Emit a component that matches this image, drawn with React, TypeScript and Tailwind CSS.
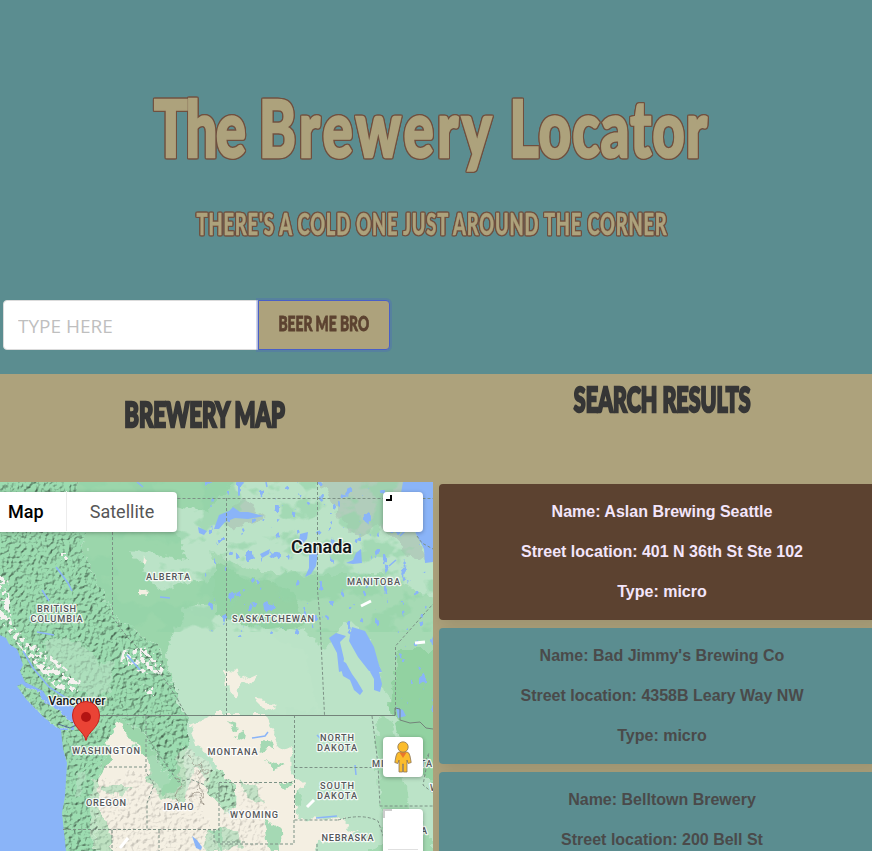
import React from "react";

const display = "font-['Lato'] font-black [stroke-linejoin:round] [paint-order:stroke_fill]";
const outline = "[filter:drop-shadow(1px_0_0_#70503f)_drop-shadow(-1px_0_0_#70503f)_drop-shadow(0_1px_0_#70503f)_drop-shadow(0_-1px_0_#70503f)]";

const results = [
  { name: "Aslan Brewing Seattle", street: "401 N 36th St Ste 102", type: "micro" },
  { name: "Bad Jimmy's Brewing Co", street: "4358B Leary Way NW", type: "micro" },
  { name: "Belltown Brewery", street: "200 Bell St", type: "micro" },
];

const labels: [string, number, number, number][] = [
  ["ALBERTA", 168, 579.5, 44],
  ["MANITOBA", 373.5, 584.5, 53],
  ["BRITISH", 56.5, 612, 39],
  ["COLUMBIA", 56.5, 621.5, 52],
  ["SASKATCHEWAN", 273, 621.5, 82],
  ["WASHINGTON", 106, 753.5, 68],
  ["MONTANA", 232.5, 754.5, 50],
  ["NORTH", 337, 741, 34],
  ["DAKOTA", 337, 750.5, 40],
  ["SOUTH", 337, 789, 34],
  ["DAKOTA", 337, 798.5, 40],
  ["OREGON", 106, 805.5, 40],
  ["IDAHO", 178.5, 809.5, 30],
  ["WYOMING", 254, 817.5, 48],
  ["NEBRASKA", 347.5, 840.5, 52],
  ["MINNESOTA", 402, 766.5, 60],
  ["IOWA", 414, 833.5, 26],
  ["W", 434, 790.5, 9],
];

function Terrain() {
  return (
    <svg className="block h-full w-full" viewBox="0 482 433 369" fontFamily="Roboto, sans-serif">
      <defs>
        <filter id="relief" x="0" y="0" width="100%" height="100%" colorInterpolationFilters="sRGB">
          <feTurbulence type="fractalNoise" baseFrequency="0.24" numOctaves="3" seed="8" result="n" />
          <feDiffuseLighting in="n" surfaceScale="1.8" diffuseConstant="1.2" lightingColor="#fff" result="l">
            <feDistantLight azimuth="225" elevation="58" />
          </feDiffuseLighting>
          <feTurbulence type="fractalNoise" baseFrequency="0.08" numOctaves="3" seed="2" result="edge" />
          <feDisplacementMap in="SourceGraphic" in2="edge" scale="16" xChannelSelector="R" yChannelSelector="G" result="s" />
          <feBlend in="s" in2="l" mode="multiply" result="b" />
          <feComposite in="b" in2="s" operator="in" />
        </filter>
        <filter id="soft" x="0" y="0" width="100%" height="100%" colorInterpolationFilters="sRGB">
          <feTurbulence type="fractalNoise" baseFrequency="0.025 0.035" numOctaves="4" seed="14" />
          <feColorMatrix values="0 0 0 0 0.58  0 0 0 0 0.83  0 0 0 0 0.66  14 0 0 0 -7.1" result="p" />
          <feComposite in="p" in2="SourceGraphic" operator="in" />
        </filter>
        <filter id="lakes" x="0" y="0" width="100%" height="100%" colorInterpolationFilters="sRGB">
          <feTurbulence type="fractalNoise" baseFrequency="0.11 0.08" numOctaves="3" seed="5" />
          <feColorMatrix values="0 0 0 0 0.54  0 0 0 0 0.71  0 0 0 0 0.97  0 30 0 0 -20.8" result="p" />
          <feComposite in="p" in2="SourceGraphic" operator="in" />
        </filter>
        <filter id="snow" x="0" y="0" width="100%" height="100%" colorInterpolationFilters="sRGB">
          <feTurbulence type="fractalNoise" baseFrequency="0.2" numOctaves="2" seed="3" />
          <feColorMatrix values="0 0 0 0 0.96  0 0 0 0 0.95  0 0 0 0 0.94  0 20 0 0 -10" result="p" />
          <feComposite in="p" in2="SourceGraphic" operator="in" />
        </filter>
        <filter id="ragged" x="-5%" y="-5%" width="110%" height="110%">
          <feTurbulence type="fractalNoise" baseFrequency="0.08" numOctaves="3" seed="2" />
          <feDisplacementMap in="SourceGraphic" scale="14" xChannelSelector="R" yChannelSelector="G" />
        </filter>
      </defs>

      <rect y="482" width="433" height="369" fill="#bbe3c7" />
      <path d="M0 482H90V700L70 851H50V700L0 640Z" fill="#91d1a4" />
      <g filter="url(#ragged)">
        <path d="M60 470H240L210 510L160 500L190 560L130 550L160 590L235 570L240 600L185 608L165 650L180 715L190 851H60Z" fill="#9bd6ab" />
        <path d="M210 550L250 570L310 575L380 575L440 600V735L400 720L385 690L370 640L350 620L325 650L305 630L240 618Z" fill="#a6dab4" />
        <path d="M216 565L240 575L290 590L305 625L265 630L216 615Z" fill="#96d2a5" />
        <path d="M397 650H440V790L405 760L390 705Z" fill="#92d2a1" />
        <path d="M315 470H410L405 495L425 560L410 556L380 525L358 538L340 518ZM240 500L265 515L235 528L220 520Z" fill="#b1cdbb" />
        <path d="M165 650L185 612L245 625L300 648L320 710L180 715Z" fill="#bde4c8" />
        <path d="M375 715L390 720L400 750L410 806L433 840V860H360L385 840L378 790Z" fill="#a3d9b1" />
      </g>
      <rect y="482" width="433" height="150" filter="url(#soft)" opacity=".6" />

      <g filter="url(#ragged)" fill="#f4efe2">
        <path d="M105 742L118 720L126 735L140 742L150 765L149 779L162 800L185 799L197 765L208 779L218 766L198 745L190 724L215 714L263 714L279 743L293 752L294 782L307 780L294 798L298 816L334 817L357 831L343 839L319 841L318 860H112V837L101 812L97 781L112 758Z" />
        <path d="M225 668L237 670L242 680L260 672L250 684L238 688L237 697L227 690ZM252 699L270 700L278 707L263 710Z" />
        <path d="M138 590L148 593L145 597L138 595ZM141 555L145 561L140 564ZM95 685L112 682L110 698L101 694Z" />
      </g>
      <g filter="url(#ragged)" fill="#a5d9b4">
        <path d="M206 770L232 778L235 793L228 800L234 816L222 809L218 792L206 787ZM238 780L258 786L263 804L251 800ZM147 758L162 750L174 767L168 780L159 793L151 780ZM102 785L121 784L131 790L110 798ZM134 740L141 748L130 750ZM239 732L247 730L245 740L235 744ZM260 744L272 742L275 749L261 752ZM295 790L304 798L300 807L294 804ZM264 815L279 830L280 851L270 851Z" />
        <path d="M210 830L238 828L241 845L220 851H205ZM228 722L240 726L234 731ZM265 760L285 766L272 770ZM282 780L294 783L285 790Z" />
      </g>

      <g filter="url(#relief)">
        <path d="M-20 470H76L82 525L90 568L112 612L138 632L159 649L171 679L184 710L191 740L184 759L168 778L157 759L146 739L132 724L119 717L109 736L101 764L96 793L98 814L91 870H40L50 785L40 728L10 686L-20 630Z" fill="#9cdcb0" />
        <path d="M206 768L228 775L237 790L236 810L224 813L207 786Z" fill="#b5e4c0" />
      </g>
      <g filter="url(#relief)" opacity=".38">
        <path d="M90 780L149 772L164 796L192 785L205 815L218 851H93ZM178 742L207 761L212 783L190 803L179 783ZM238 780L263 786L267 851H220L222 810L243 804Z" fill="#f8f3e7" />
      </g>
      <path d="M43 640L78 639L100 665L115 661L108 690L92 704L75 684L62 667L51 674ZM78 775L85 768L84 800L76 798Z" fill="#bbe3c7" opacity=".55" filter="url(#ragged)" />
      <g filter="url(#snow)">
        <path d="M0 575L8 578L12 625L30 642L43 649L81 681L77 694L56 688L36 666L19 646L0 620ZM123 650L150 647L164 669L161 675L141 673L120 662ZM61 553L68 553L68 560L61 560ZM143 684L153 686L154 696L147 697Z" />
      </g>
      <path d="M174 777L181 788L177 799L188 809L196 790L204 805L196 775L207 770L192 758" fill="none" stroke="#938c7f" strokeWidth=".7" filter="url(#ragged)" />

      <g fill="#8ab4f8">
        <path d="M0 635L6 638L9 644L17 649L21 659L23 665L20 671L25 682L43 691L48 699L68 703L78 711L77 724L72 726L63 716L48 707L37 697L22 684L17 686L26 699L36 709L46 719L54 725L63 728L74 727L74 730L61 730L63 749L67 763L66 780L65 796L62 813L64 832L66 851H0Z" />
        <path d="M403 482H433V562L425 563L424 549L417 536L413 527L399 515L401 493Z" />
        <path d="M214 529L219 515L229 511L233 507L240 512L248 512L264 516L248 519L235 518L225 522L219 529ZM300 534L308 532L307 539L303 543L299 541ZM309 555L318 552L316 566L311 574L305 577L309 568ZM352 627L365 631L374 647L379 665L382 672L369 671L358 657L349 641ZM329 638L336 633L346 636L340 642L344 659L342 671L339 672L337 653ZM338 658L346 663L352 674L357 681L363 691L360 695L354 690L350 680L343 676ZM365 656L374 660L378 668L382 684L380 692L374 690L374 679L369 670Z" />
        <path d="M198 527L207 531L204 535L199 533ZM260 554L270 549L269 554L262 558ZM356 553L361 549L362 563L353 564L346 563L353 560ZM396 707L403 710L406 716L398 718ZM192 836L197 840L202 847L201 850L196 848Z" />
      </g>
      <g filter="url(#relief)">
        <path d="M20 688Q34 688 45 700L61 712L74 725L69 732L55 725L42 713L31 703Z" fill="#9cdcb0" />
      </g>
      <path d="M23 651L33 668L49 687L69 700" fill="none" stroke="#8ab4f8" strokeWidth="1.5" />
      <g fill="none" stroke="#8ab4f8" strokeWidth="1.5">
        <path d="M56 567L68 583L72 591M42 590L49 601M37 632L54 635M160 597L170 598M127 655L140 670M252 738L265 736L268 732M400 536L407 529M317 735L321 739M355 765L356 775M266 482L267 487M137 482L143 487M316 818L337 816M366 588L373 580M396 560L389 566" />
      </g>
      <rect x="205" y="482" width="228" height="155" filter="url(#lakes)" />
      <rect x="395" y="637" width="38" height="75" filter="url(#lakes)" />

      <g fill="none" stroke="#7d9286" strokeWidth="1" strokeDasharray="3 2">
        <path d="M112.5 532V617L128 638L149 659L165 680L178 700L186 715M112.5 498.500H433M226.500 498V715M317.500 482V590L320 620L324.500 715M395.500 715V646L433 604M294.500 715V820H338M294.500 767.500H374M372 716L376 748L378 765L380 806H433M219 782.500H294M219 783V843M294 820V844H219M104 767H146M146 739V772L154 785L147 803V830M63 829.500H219M112 830V851M214 830V842H245M317 844V851M338 820Q363 813 378 821L385 841M417 536L422 543L433 549M423 765L429 753L423 785L433 793" />
        <path d="M146 716V735L157 752L168 767L178 782L190 779L205 785M159 830V851" />
      </g>
      <path d="M86 715.500H395V708L400 709V720L410 723L420 722L426 728L433 729" fill="none" stroke="#73837a" />
      <path d="M58 724L70 728L78 724" fill="none" stroke="#556f99" />
      <path d="M307 807L314 800M361 606L371 601M415 643L425 642M120 848L128 838" stroke="#fff" strokeWidth="3" />

      <g textAnchor="middle" fill="#55575a" stroke="#fff" strokeOpacity=".85" strokeWidth="2.4" strokeLinejoin="round" paintOrder="stroke" fontSize="9.2" fontWeight="500">
        {labels.map(([text, x, y, width]) => (
          <text key={text + x + y} x={x} y={y} textLength={width} lengthAdjust="spacing">{text}</text>
        ))}
      </g>
      <g textAnchor="middle" fill="#18191b" stroke="#fff" strokeOpacity=".8" strokeWidth="2.5" strokeLinejoin="round" paintOrder="stroke">
        <text x="321.5" y="553" fontSize="18" fontWeight="600" textLength="61" lengthAdjust="spacingAndGlyphs">Canada</text>
        <text x="77" y="705" fontSize="12" fontWeight="500" textLength="57" lengthAdjust="spacingAndGlyphs">Vancouver</text>
      </g>
      <path d="M86 740.500C84 731 72.500 728 72.500 715A13.500 13.500 0 0 1 99.500 715C99.500 728 88 731 86 740.500Z" fill="#ea4335" stroke="#c5221f" strokeWidth="1" />
      <circle cx="86" cy="717" r="5" fill="#b31412" />
    </svg>
  );
}

function Pegman() {
  return (
    <svg width="18" height="32" viewBox="0 0 18 32">
      <path d="M5 11Q3 11 2 15L.8 21.500L3.800 22.500L5 19V31H8.600V23H9.400V31H13V19L14.200 22.500L17.200 21.500L16 15Q15 11 13 11Z" fill="#fbbc2c" stroke="#8a7355" strokeWidth=".8" />
      <path d="M5.500 11.500H12.500L9 17Z" fill="#e9762b" />
      <circle cx="9" cy="6" r="5.200" fill="#fbbc2c" stroke="#8a7355" strokeWidth=".8" />
    </svg>
  );
}

export default function App() {
  return (
    <div className="h-[851px] w-full overflow-hidden bg-[#ada27c]">
      <header className="flex h-[374px] flex-col bg-[#5b8d90]">
        <h1 className={`${display} ${outline} mt-[76px] flex h-[100px] w-[863px] items-center justify-center whitespace-nowrap text-[79px] leading-none text-[#ada27c] [-webkit-text-stroke:2.5px_#ada27c]`}>
          <span className="inline-block scale-x-[0.705] tracking-[2px]">
            <span className="tracking-[-2px]">The</span> <span className="tracking-[5px]">Brewery</span> Locator
          </span>
        </h1>
        <h2 className={`${display} ${outline} mt-[27px] flex h-10 w-[864px] items-center justify-center whitespace-nowrap text-[30px] leading-none text-[#ada27c] [-webkit-text-stroke:0.4px_#ada27c]`}>
          <span className="inline-block scale-x-[0.61] tracking-[1.4px]">THERE'S A COLD ONE JUST AROUND THE CORNER</span>
        </h2>
        <form className="mt-[57px] ml-[3px] flex h-[50px]" onSubmit={(e) => e.preventDefault()}>
          <input
            aria-label="Search"
            placeholder="TYPE HERE"
            className="h-[50px] w-[255px] rounded-l border border-[#dbdbdb] bg-white px-3.5 pt-0.5 font-['Open_Sans'] text-[19px] outline-none placeholder:text-[#bfbfbf]"
          />
          <button className={`${display} flex h-[50px] w-[132px] items-center justify-center rounded-r border border-[#485fc7] bg-[#ada27c] pb-1 text-[20px] whitespace-nowrap text-[#5c4230] shadow-[0_0_0_2px_rgba(72,95,199,0.25)] [-webkit-text-stroke:0.8px_#5c4230]`}>
            <span className="inline-block scale-x-[0.69]">BEER ME BRO</span>
          </button>
        </form>
      </header>

      <main className="flex">
        <section className="w-[433px] shrink-0">
          <h2 className={`${display} flex h-[108px] w-[409px] items-center justify-center pb-[28px] text-[34px] leading-none whitespace-nowrap text-[#363636] [-webkit-text-stroke:2.5px_#363636]`}>
            <span className="inline-block scale-x-[0.65]">BREWERY MAP</span>
          </h2>
          <div className="relative h-[369px] overflow-hidden font-['Roboto']">
            <Terrain />
            <div className="absolute top-2.5 left-0 flex h-10 w-[177px] items-center rounded-r-sm bg-white pb-0.5 text-[18px] shadow-[0_1px_4px_rgba(0,0,0,0.3)]">
              <span className="flex h-10 w-[67px] items-center border-r border-[#ececec] pl-2 font-medium text-black">Map</span>
              <span className="flex-1 text-center text-[#565656]">Satellite</span>
            </div>
            <div className="absolute top-2.5 right-2.5 h-10 w-10 rounded-sm bg-white pt-[3px] pl-[3px] shadow-[0_1px_4px_rgba(0,0,0,0.3)]">
              <div className="h-1.5 w-1.5 border-r-2 border-b-2 border-black" />
            </div>
            <div className="absolute top-[255px] right-2.5 flex h-10 w-10 items-center justify-center rounded-sm bg-white shadow-[0_1px_4px_rgba(0,0,0,0.3)]">
              <Pegman />
            </div>
            <div className="absolute top-[327px] right-2.5 h-[81px] w-10 rounded-sm bg-white px-[5px] shadow-[0_1px_4px_rgba(0,0,0,0.3)]">
              <div className="-ml-[5px] h-[9px] w-[9px] border-t-2 border-l-2 border-[#cccccc]" />
              <div className="mt-[31px] h-px bg-[#e0e0e0]" />
            </div>
          </div>
        </section>

        <section className="ml-1.5 w-[446px] shrink-0">
          <h2 className={`${display} flex h-[110px] items-center justify-center pb-[61px] text-[34px] leading-none whitespace-nowrap text-[#363636] [-webkit-text-stroke:2.5px_#363636]`}>
            <span className="inline-block scale-x-[0.63]">SEARCH RESULTS</span>
          </h2>
          <div className="flex flex-col gap-2 font-['Liberation_Sans'] text-base leading-6 font-bold">
            {results.map((result, index) => (
              <article
                key={result.name}
                className={`flex h-[136px] flex-col items-center gap-4 rounded pt-4 shadow-[0_8px_16px_-2px_rgba(10,10,10,0.1)] ${index === 0 ? "bg-[#5c4230] text-[#f3e5fa]" : "bg-[#5b8d90] text-[#4a4a4a]"}`}
              >
                <p>Name: {result.name}</p>
                <p>Street location: {result.street}</p>
                <p>Type: {result.type}</p>
              </article>
            ))}
          </div>
        </section>
      </main>
    </div>
  );
}
